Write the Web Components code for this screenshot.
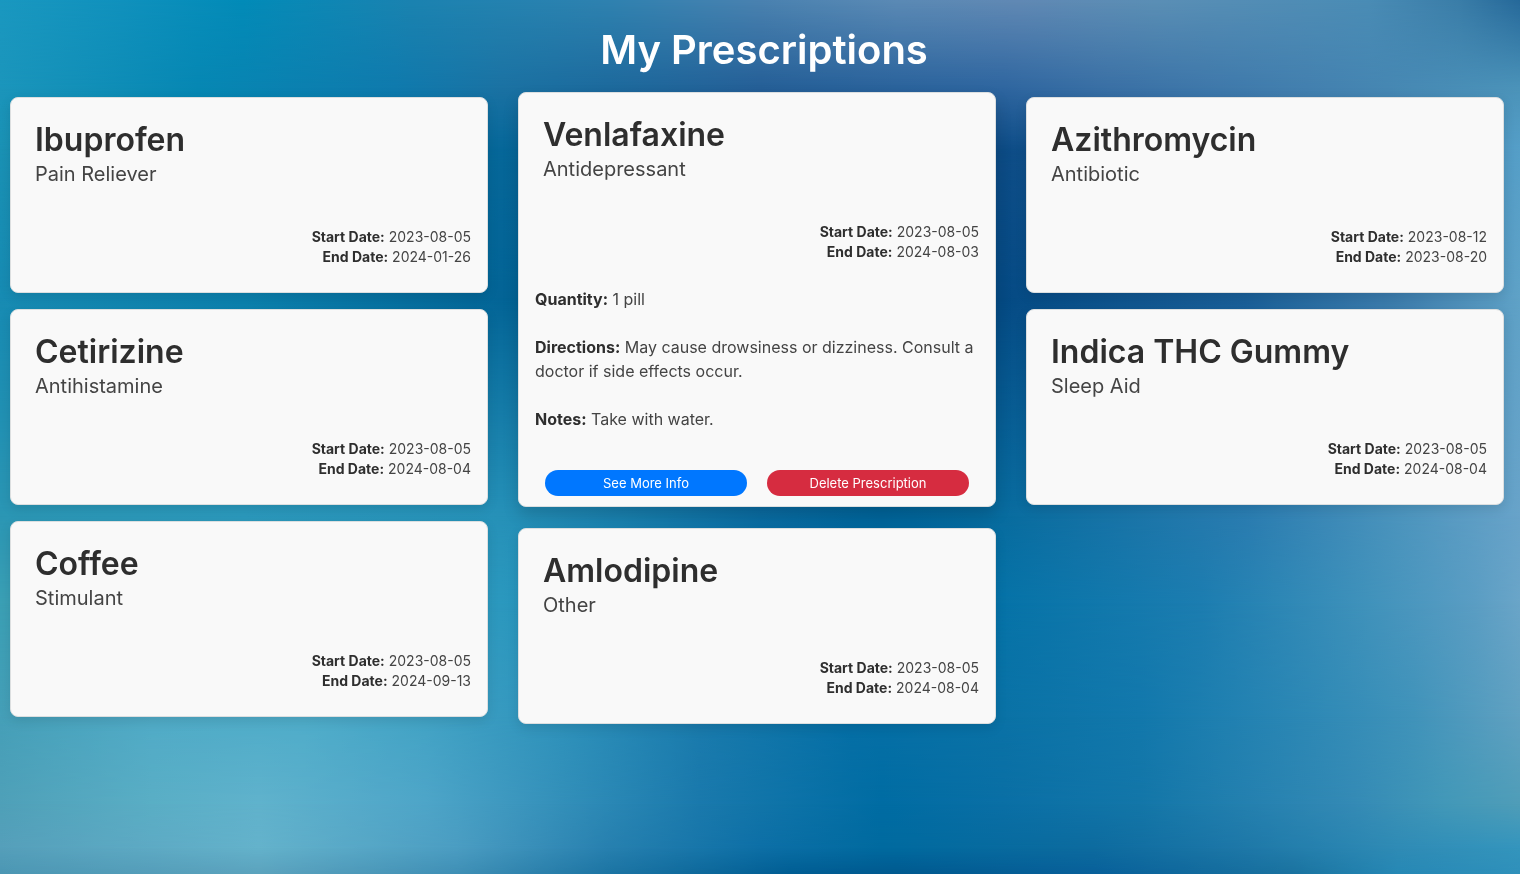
<!DOCTYPE html>
<html lang="en">
<head>
<meta charset="utf-8">
<title>My Prescriptions</title>
<style>
  html, body { margin: 0; min-height: 100vh; }
  body { font-family: Inter, "Liberation Sans", sans-serif; color: #444; }
</style>
</head>
<body>
<prescriptions-page>
  <card-column>
    <prescription-card name="Ibuprofen" kind="Pain Reliever" start="2023-08-05" end="2024-01-26"></prescription-card>
    <prescription-card name="Cetirizine" kind="Antihistamine" start="2023-08-05" end="2024-08-04"></prescription-card>
    <prescription-card name="Coffee" kind="Stimulant" start="2023-08-05" end="2024-09-13"></prescription-card>
  </card-column>
  <card-column>
    <prescription-card raised name="Venlafaxine" kind="Antidepressant" start="2023-08-05" end="2024-08-03">
      <prescription-details>
        <span slot="quantity">1 pill</span>
        <span slot="directions">May cause drowsiness or dizziness. Consult a doctor if side effects occur.</span>
        <span slot="notes">Take with water.</span>
      </prescription-details>
    </prescription-card>
    <prescription-card name="Amlodipine" kind="Other" start="2023-08-05" end="2024-08-04"></prescription-card>
  </card-column>
  <card-column>
    <prescription-card name="Azithromycin" kind="Antibiotic" start="2023-08-12" end="2023-08-20"></prescription-card>
    <prescription-card name="Indica THC Gummy" kind="Sleep Aid" start="2023-08-05" end="2024-08-04"></prescription-card>
  </card-column>
</prescriptions-page>
<script>
// Colour rows of the backdrop: [height %, [[x %, colour], ...]]
const ROWS = [
  [0, [[0,'#1a98c0'],[8,'#1091bd'],[16,'#028bb8'],[27,'#1b83b0'],[40,'#2f82b0'],[50,'#4a82b0'],[59,'#5b8ab5'],[67,'#6189b4'],[76,'#5b8fb5'],[90,'#4a8cb5'],[96,'#3a7da8'],[100,'#26699a']]],
  [10, [[0,'#1b95bb'],[13,'#0687b3'],[26,'#0f7aad'],[33,'#1b72a3'],[40,'#1d6a9d'],[50,'#255f97'],[66,'#2f66a0'],[73,'#3a70a5'],[86,'#4380af'],[100,'#4b93b9']]],
  [17, [[0,'#1b92b5'],[16,'#0582ac'],[33,'#066799'],[50,'#1c558f'],[66,'#0d4c86'],[82,'#2a6aa3'],[92,'#4080b0'],[100,'#559fc8']]],
  [34, [[0,'#178bb3'],[16,'#0b80ad'],[33,'#036496'],[66,'#054a84'],[82,'#1a5f98'],[92,'#3d7dad'],[100,'#5fa2c7']]],
  [59, [[0,'#2b96b4'],[16,'#2b98bb'],[33,'#2691b8'],[50,'#0a6ca2'],[58,'#00659b'],[66,'#086c9f'],[82,'#2a7cb0'],[92,'#4b94bd'],[100,'#68a3c9']]],
  [69, [[0,'#3ba0b5'],[16,'#3ca0c0'],[33,'#2b98be'],[50,'#0a72a8'],[58,'#0069a0'],[66,'#0673a8'],[79,'#1c7db0'],[90,'#4092bb'],[97,'#5a9dc3'],[100,'#6aa5c8']]],
  [82, [[0,'#459fb8'],[10,'#50abc7'],[20,'#4fadca'],[28,'#42a3c5'],[37,'#2e92bb'],[46,'#1a7bad'],[56,'#056fa6'],[66,'#0a72a6'],[75,'#1278ac'],[86,'#2d88b5'],[93,'#4093ba'],[100,'#60a1c1']]],
  [92, [[0,'#4fa0b8'],[10,'#5aaec5'],[17,'#60b2cc'],[28,'#4ea5c8'],[37,'#338fb9'],[46,'#1a79ac'],[58,'#006ca3'],[66,'#0a6fa5'],[75,'#1376a8'],[82,'#2480af'],[89,'#348ab5'],[95,'#4298b8'],[100,'#4f9db8']]],
  [97, [[0,'#559fba'],[17,'#64b2cb'],[30,'#4b9dc2'],[40,'#2780af'],[50,'#0d6fa6'],[58,'#006a9f'],[72,'#0d6b9f'],[82,'#1e78a8'],[92,'#2f8bb5'],[100,'#3495bd']]],
  [100, [[0,'#4b96b3'],[17,'#5ba2bd'],[30,'#3f8fb5'],[40,'#1c74a3'],[52,'#005d93'],[59,'#00598f'],[72,'#08609a'],[85,'#1a729f'],[92,'#2688b5'],[100,'#2f90ba']]],
];

function attach(el, html) {
  const t = document.createElement('template');
  t.innerHTML = html;
  el.attachShadow({ mode: 'open' }).append(t.content.cloneNode(true));
}

customElements.define('soft-backdrop', class extends HTMLElement {
  constructor() {
    super();
    // Each layer fades in from the previous row down to its own, so rows blend smoothly.
    const layers = ROWS.map(([y, stops], i) => {
      const ramp = `linear-gradient(90deg,${stops.map(([x, c]) => `${c} ${x}%`).join(',')})`;
      const mask = i ? `mask-image:linear-gradient(transparent ${ROWS[i - 1][0]}%,#000 ${y}%);` : '';
      return `<div style="background:${ramp};${mask}"></div>`;
    }).join('');
    attach(this, `<style>
      :host { position: fixed; inset: 0; z-index: -1; display: grid; }
      div { grid-area: 1 / 1; }
    </style>${layers}`);
  }
});

customElements.define('prescriptions-page', class extends HTMLElement {
  constructor() {
    super();
    attach(this, `<style>
      :host { display: block; padding: 26px 16px 16px 10px; }
      h1 { margin: 0 0 23px; padding-left: 14px; text-align: center; color: #fff; font-size: 40px; font-weight: 600; line-height: 48px; }
      main { display: grid; grid-template-columns: repeat(3, minmax(0, 1fr)); gap: 30px; align-items: start; }
    </style>
    <soft-backdrop></soft-backdrop>
    <h1>My Prescriptions</h1>
    <main><slot></slot></main>`);
  }
});

customElements.define('card-column', class extends HTMLElement {
  constructor() {
    super();
    attach(this, `<style>
      :host { display: flex; flex-direction: column; gap: 16px; }
    </style><slot></slot>`);
  }
});

customElements.define('prescription-card', class extends HTMLElement {
  constructor() {
    super();
    attach(this, `<style>
      :host { display: block; box-sizing: border-box; padding: 24px 16px 25px; background: #f9f9f9; border: 1px solid #dcdfe0; border-radius: 8px; box-shadow: 0 4px 12px rgba(0, 0, 0, .1); }
      :host([raised]) { padding-bottom: 10px; transform: translateY(-5px); box-shadow: 0 8px 16px rgba(0, 0, 0, .15); }
      header { padding: 0 8px; }
      h2 { margin: 0; color: #2e2e2e; font-size: 32px; font-weight: 600; line-height: 36px; }
      .kind { margin: 0; font-size: 20px; line-height: 32px; }
      .dates { margin: 37px 0 0; text-align: right; font-size: 14px; line-height: 20px; }
      b { color: #2e2e2e; font-weight: 700; }
    </style>
    <header><h2></h2><p class="kind"></p></header>
    <p class="dates"><b>Start Date:</b> <span id="start"></span><br><b>End Date:</b> <span id="end"></span></p>
    <slot></slot>`);
  }
  connectedCallback() {
    const r = this.shadowRoot;
    r.querySelector('h2').textContent = this.getAttribute('name');
    r.querySelector('.kind').textContent = this.getAttribute('kind');
    r.querySelector('#start').textContent = this.getAttribute('start');
    r.querySelector('#end').textContent = this.getAttribute('end');
  }
});

customElements.define('prescription-details', class extends HTMLElement {
  constructor() {
    super();
    attach(this, `<style>
      :host { display: grid; gap: 24px; padding-top: 25px; font-size: 16px; line-height: 24px; }
      p { margin: 0; }
      b { color: #2e2e2e; font-weight: 700; }
      .actions { display: grid; grid-template-columns: 1fr 1fr; gap: 20px; margin-top: 15px; padding: 0 10px; }
      button { height: 26px; padding: 0; border: 0; border-radius: 13px; color: #fff; background: #0077ff; font: 400 13px/26px Inter, sans-serif; }
      .delete { background: #d62c40; }
    </style>
    <p><b>Quantity:</b> <slot name="quantity"></slot></p>
    <p><b>Directions:</b> <slot name="directions"></slot></p>
    <p><b>Notes:</b> <slot name="notes"></slot></p>
    <div class="actions"><button type="button">See More Info</button><button type="button" class="delete">Delete Prescription</button></div>`);
  }
});
</script>
</body>
</html>
